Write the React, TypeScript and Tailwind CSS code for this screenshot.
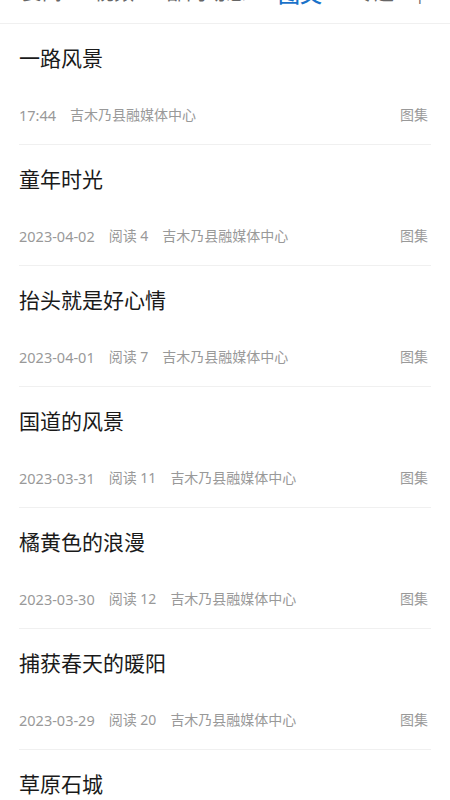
import React from 'react';

const tabs = ['要闻', '视频', '部门动态', '图文', '专题'];

const items = [
  { title: '一路风景', date: '17:44', reads: null },
  { title: '童年时光', date: '2023-04-02', reads: 4 },
  { title: '抬头就是好心情', date: '2023-04-01', reads: 7 },
  { title: '国道的风景', date: '2023-03-31', reads: 11 },
  { title: '橘黄色的浪漫', date: '2023-03-30', reads: 12 },
  { title: '捕获春天的暖阳', date: '2023-03-29', reads: 20 },
  { title: '草原石城', date: '2023-03-28', reads: 9 },
];

export default function App() {
  return (
    <div
      className="w-[450px] h-[800px] overflow-hidden bg-white"
      style={{ fontFamily: '"Noto Sans", "Noto Sans CJK SC", sans-serif' }}
    >
      {/* Tab bar (scrolled partly off screen) */}
      <div className="h-[61px] -mt-[37px] flex items-center gap-[32px] border-b border-[#f0f0f0] pl-[22px] whitespace-nowrap">
        {tabs.map((t) => (
          <span
            key={t}
            className={
              t === '图文'
                ? 'shrink-0 text-[22px] text-[#1a72c9] font-medium'
                : 'shrink-0 text-[20px] text-[#666666]'
            }
          >
            {t}
          </span>
        ))}
        <span className="shrink-0 -ml-[13px] mt-[9px] text-[24px] text-[#666666] font-light leading-none">+</span>
      </div>

      {/* List */}
      <div>
        {items.map((it) => (
          <div key={it.title} className="mx-[19px] border-b border-[#f0f0f0] pt-[20px] pb-[19px]">
            <div className="text-[21px] leading-[28px] text-[#1a1a1a]">{it.title}</div>
            <div className="mt-[33px] flex items-center text-[14px] leading-[20px] text-[#999999] whitespace-nowrap">
              <span className="mr-[14px] text-[14.5px]">{it.date}</span>
              {it.reads !== null && <span className="mr-[14px]">阅读 {it.reads}</span>}
              <span>吉木乃县融媒体中心</span>
              <span className="ml-auto mr-[3px]">图集</span>
            </div>
          </div>
        ))}
      </div>
    </div>
  );
}
